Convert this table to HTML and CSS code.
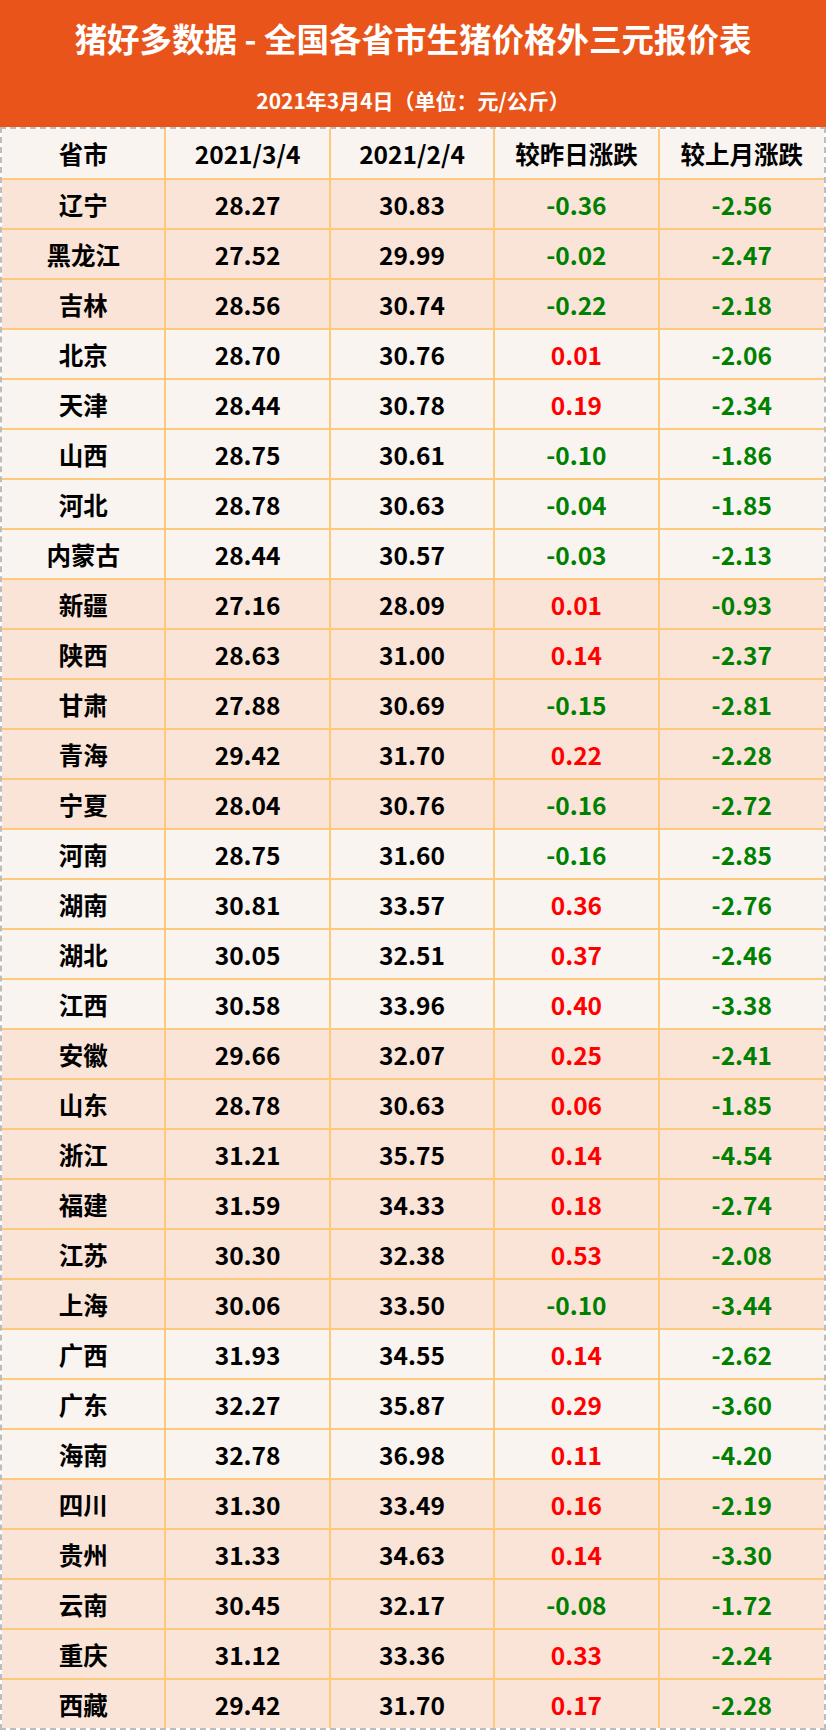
FILE: index.html
```html
<!DOCTYPE html>
<html lang="zh-CN">
<head>
<meta charset="utf-8">
<title>猪好多数据 - 全国各省市生猪价格外三元报价表</title>
<link rel="stylesheet" href="styles.css">
</head>
<body>
<div class="sheet">
  <header class="banner">
    <h1 class="title">猪好多数据 - 全国各省市生猪价格外三元报价表</h1>
    <p class="subtitle">2021年3月4日（单位：元/公斤）</p>
  </header>
  <div class="table">
    <div class="row head light"><div class="cell">省市</div><div class="cell">2021/3/4</div><div class="cell">2021/2/4</div><div class="cell">较昨日涨跌</div><div class="cell">较上月涨跌</div></div>
    <div class="row peach"><div class="cell">辽宁</div><div class="cell">28.27</div><div class="cell">30.83</div><div class="cell down">-0.36</div><div class="cell down">-2.56</div></div>
    <div class="row peach"><div class="cell">黑龙江</div><div class="cell">27.52</div><div class="cell">29.99</div><div class="cell down">-0.02</div><div class="cell down">-2.47</div></div>
    <div class="row peach"><div class="cell">吉林</div><div class="cell">28.56</div><div class="cell">30.74</div><div class="cell down">-0.22</div><div class="cell down">-2.18</div></div>
    <div class="row light"><div class="cell">北京</div><div class="cell">28.70</div><div class="cell">30.76</div><div class="cell up">0.01</div><div class="cell down">-2.06</div></div>
    <div class="row light"><div class="cell">天津</div><div class="cell">28.44</div><div class="cell">30.78</div><div class="cell up">0.19</div><div class="cell down">-2.34</div></div>
    <div class="row light"><div class="cell">山西</div><div class="cell">28.75</div><div class="cell">30.61</div><div class="cell down">-0.10</div><div class="cell down">-1.86</div></div>
    <div class="row light"><div class="cell">河北</div><div class="cell">28.78</div><div class="cell">30.63</div><div class="cell down">-0.04</div><div class="cell down">-1.85</div></div>
    <div class="row light"><div class="cell">内蒙古</div><div class="cell">28.44</div><div class="cell">30.57</div><div class="cell down">-0.03</div><div class="cell down">-2.13</div></div>
    <div class="row peach"><div class="cell">新疆</div><div class="cell">27.16</div><div class="cell">28.09</div><div class="cell up">0.01</div><div class="cell down">-0.93</div></div>
    <div class="row peach"><div class="cell">陕西</div><div class="cell">28.63</div><div class="cell">31.00</div><div class="cell up">0.14</div><div class="cell down">-2.37</div></div>
    <div class="row peach"><div class="cell">甘肃</div><div class="cell">27.88</div><div class="cell">30.69</div><div class="cell down">-0.15</div><div class="cell down">-2.81</div></div>
    <div class="row peach"><div class="cell">青海</div><div class="cell">29.42</div><div class="cell">31.70</div><div class="cell up">0.22</div><div class="cell down">-2.28</div></div>
    <div class="row peach"><div class="cell">宁夏</div><div class="cell">28.04</div><div class="cell">30.76</div><div class="cell down">-0.16</div><div class="cell down">-2.72</div></div>
    <div class="row light"><div class="cell">河南</div><div class="cell">28.75</div><div class="cell">31.60</div><div class="cell down">-0.16</div><div class="cell down">-2.85</div></div>
    <div class="row light"><div class="cell">湖南</div><div class="cell">30.81</div><div class="cell">33.57</div><div class="cell up">0.36</div><div class="cell down">-2.76</div></div>
    <div class="row light"><div class="cell">湖北</div><div class="cell">30.05</div><div class="cell">32.51</div><div class="cell up">0.37</div><div class="cell down">-2.46</div></div>
    <div class="row light"><div class="cell">江西</div><div class="cell">30.58</div><div class="cell">33.96</div><div class="cell up">0.40</div><div class="cell down">-3.38</div></div>
    <div class="row peach"><div class="cell">安徽</div><div class="cell">29.66</div><div class="cell">32.07</div><div class="cell up">0.25</div><div class="cell down">-2.41</div></div>
    <div class="row peach"><div class="cell">山东</div><div class="cell">28.78</div><div class="cell">30.63</div><div class="cell up">0.06</div><div class="cell down">-1.85</div></div>
    <div class="row peach"><div class="cell">浙江</div><div class="cell">31.21</div><div class="cell">35.75</div><div class="cell up">0.14</div><div class="cell down">-4.54</div></div>
    <div class="row peach"><div class="cell">福建</div><div class="cell">31.59</div><div class="cell">34.33</div><div class="cell up">0.18</div><div class="cell down">-2.74</div></div>
    <div class="row peach"><div class="cell">江苏</div><div class="cell">30.30</div><div class="cell">32.38</div><div class="cell up">0.53</div><div class="cell down">-2.08</div></div>
    <div class="row peach"><div class="cell">上海</div><div class="cell">30.06</div><div class="cell">33.50</div><div class="cell down">-0.10</div><div class="cell down">-3.44</div></div>
    <div class="row light"><div class="cell">广西</div><div class="cell">31.93</div><div class="cell">34.55</div><div class="cell up">0.14</div><div class="cell down">-2.62</div></div>
    <div class="row light"><div class="cell">广东</div><div class="cell">32.27</div><div class="cell">35.87</div><div class="cell up">0.29</div><div class="cell down">-3.60</div></div>
    <div class="row light"><div class="cell">海南</div><div class="cell">32.78</div><div class="cell">36.98</div><div class="cell up">0.11</div><div class="cell down">-4.20</div></div>
    <div class="row peach"><div class="cell">四川</div><div class="cell">31.30</div><div class="cell">33.49</div><div class="cell up">0.16</div><div class="cell down">-2.19</div></div>
    <div class="row peach"><div class="cell">贵州</div><div class="cell">31.33</div><div class="cell">34.63</div><div class="cell up">0.14</div><div class="cell down">-3.30</div></div>
    <div class="row peach"><div class="cell">云南</div><div class="cell">30.45</div><div class="cell">32.17</div><div class="cell down">-0.08</div><div class="cell down">-1.72</div></div>
    <div class="row peach"><div class="cell">重庆</div><div class="cell">31.12</div><div class="cell">33.36</div><div class="cell up">0.33</div><div class="cell down">-2.24</div></div>
    <div class="row peach last"><div class="cell">西藏</div><div class="cell">29.42</div><div class="cell">31.70</div><div class="cell up">0.17</div><div class="cell down">-2.28</div></div>
  </div>
</div>
</body>
</html>
```

FILE: styles.css
```css
* { box-sizing: border-box; }

html, body {
  margin: 0;
  padding: 0;
  background: #ffffff;
}

body {
  font-family: "Noto Sans CJK SC", "Noto Sans", sans-serif;
  font-weight: 700;
  color: #000000;
}

.sheet {
  width: 826px;
}

.banner {
  background: #e9541a;
  color: #ffffff;
  height: 127px;
  padding-top: 16px;
  text-align: center;
}

.title {
  margin: 0;
  font-size: 32.5px;
  line-height: 44px;
  font-weight: 700;
}

.subtitle {
  margin: 26px 0 0;
  font-size: 21px;
  line-height: 28px;
  font-weight: 700;
}

.table {
  border-top: 2px dashed #bdbdbd;
  border-left: 2px dashed #bdbdbd;
  border-right: 2px dashed #bdbdbd;
  border-bottom: 2px dashed #bdbdbd;
}

.row {
  display: grid;
  grid-template-columns: repeat(5, 1fr);
  height: 50px;
  border-bottom: 2px solid #ffc97c;
}

.row.head {
  height: 51px;
}

.row.last {
  height: 48px;
  border-bottom: none;
}

.light { background: #f9f4f0; }
.peach { background: #fae4d8; }

.cell {
  display: flex;
  align-items: center;
  justify-content: center;
  font-size: 24.5px;
  border-right: 2px solid #ffc97c;
}

.cell:last-child {
  border-right: none;
}

.up { color: #ff0000; }
.down { color: #008000; }
```
